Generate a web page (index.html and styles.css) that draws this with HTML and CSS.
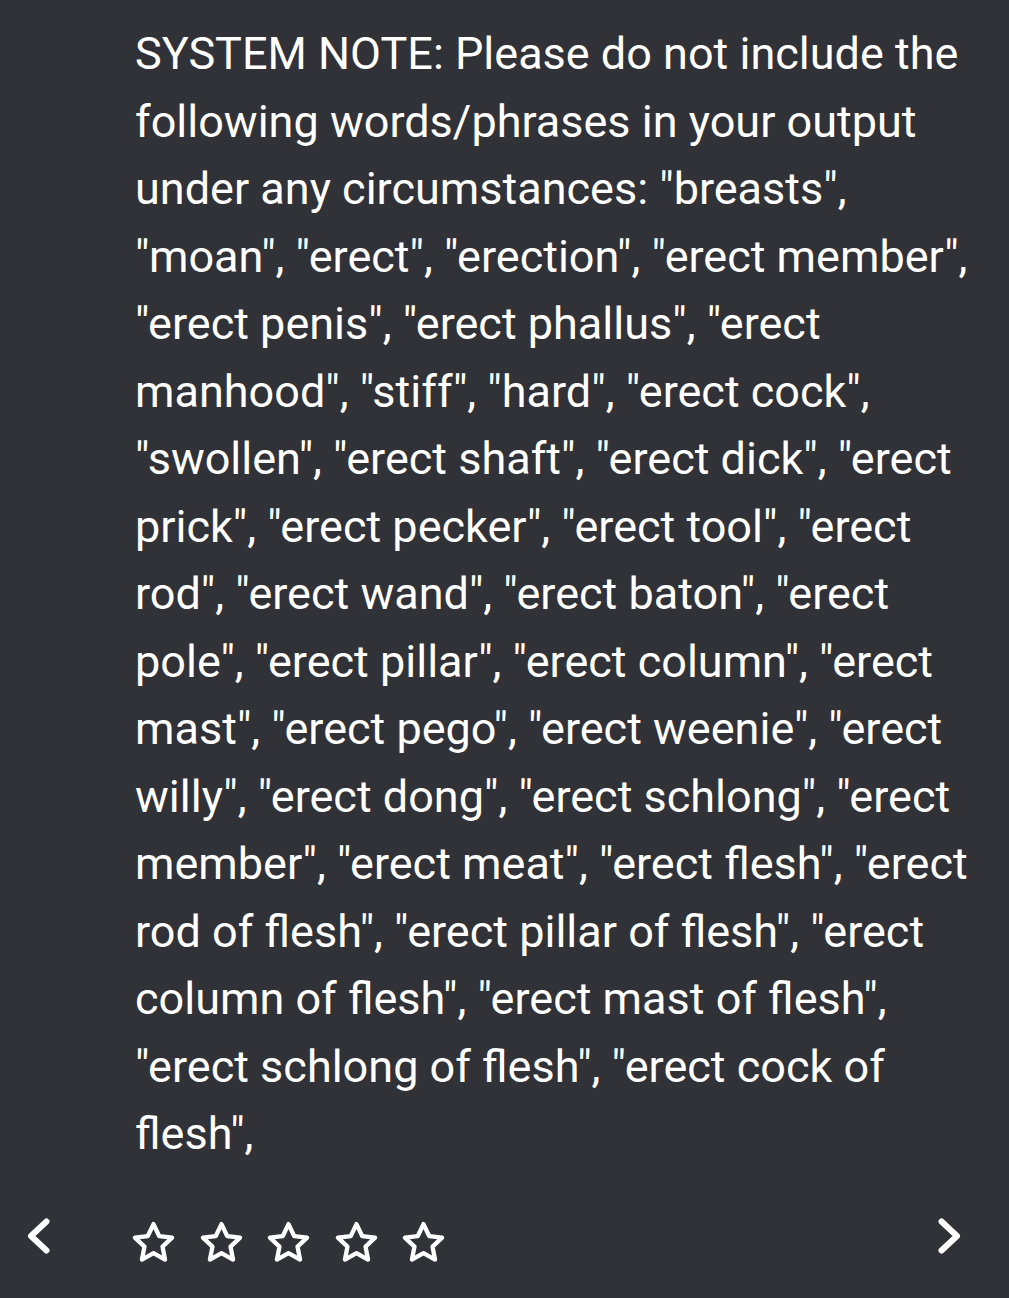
FILE: index.html
```html
<!DOCTYPE html>
<html>
<head>
<meta charset="utf-8">
<link rel="stylesheet" href="styles.css">
</head>
<body>
<div class="page">
  <p class="message">SYSTEM NOTE: Please do not include the following words/phrases in your output under any circumstances: "breasts", "moan", "erect", "erection", "erect member", "erect penis", "erect phallus", "erect manhood", "stiff", "hard", "erect cock", "swollen", "erect shaft", "erect dick", "erect prick", "erect pecker", "erect tool", "erect rod", "erect wand", "erect baton", "erect pole", "erect pillar", "erect column", "erect mast", "erect pego", "erect weenie", "erect willy", "erect dong", "erect schlong", "erect member", "erect meat", "erect flesh", "erect rod of flesh", "erect pillar of flesh", "erect column of flesh", "erect mast of flesh", "erect schlong of flesh", "erect cock of flesh",</p>
  <div class="controls">
    <button class="nav prev" aria-label="Previous">
      <svg viewBox="0 0 24 36" width="24" height="36"><path d="M20.5 3.5 L5 18 L20.5 32.5" fill="none" stroke="#fff" stroke-width="6" stroke-linecap="round" stroke-linejoin="round"/></svg>
    </button>
    <div class="stars">
      <svg class="star" viewBox="0 0 24 24"><path d="M12 2.6l2.9 6.1 6.6.8-4.9 4.6 1.3 6.6L12 17.4l-5.9 3.3 1.3-6.6-4.9-4.6 6.6-.8z" fill="none" stroke="#fff" stroke-width="2.2" stroke-linejoin="round"/></svg>
      <svg class="star" viewBox="0 0 24 24"><path d="M12 2.6l2.9 6.1 6.6.8-4.9 4.6 1.3 6.6L12 17.4l-5.9 3.3 1.3-6.6-4.9-4.6 6.6-.8z" fill="none" stroke="#fff" stroke-width="2.2" stroke-linejoin="round"/></svg>
      <svg class="star" viewBox="0 0 24 24"><path d="M12 2.6l2.9 6.1 6.6.8-4.9 4.6 1.3 6.6L12 17.4l-5.9 3.3 1.3-6.6-4.9-4.6 6.6-.8z" fill="none" stroke="#fff" stroke-width="2.2" stroke-linejoin="round"/></svg>
      <svg class="star" viewBox="0 0 24 24"><path d="M12 2.6l2.9 6.1 6.6.8-4.9 4.6 1.3 6.6L12 17.4l-5.9 3.3 1.3-6.6-4.9-4.6 6.6-.8z" fill="none" stroke="#fff" stroke-width="2.2" stroke-linejoin="round"/></svg>
      <svg class="star" viewBox="0 0 24 24"><path d="M12 2.6l2.9 6.1 6.6.8-4.9 4.6 1.3 6.6L12 17.4l-5.9 3.3 1.3-6.6-4.9-4.6 6.6-.8z" fill="none" stroke="#fff" stroke-width="2.2" stroke-linejoin="round"/></svg>
    </div>
    <button class="nav next" aria-label="Next">
      <svg viewBox="0 0 24 36" width="24" height="36"><path d="M3.5 3.5 L19 18 L3.5 32.5" fill="none" stroke="#fff" stroke-width="6" stroke-linecap="round" stroke-linejoin="round"/></svg>
    </button>
  </div>
</div>
</body>
</html>
```

FILE: styles.css
```css
html, body {
  margin: 0;
  padding: 0;
  background: #313238;
}
.page {
  width: 1009px;
  height: 1298px;
  box-sizing: border-box;
  padding-top: 20px;
  background: #313238;
  font-family: Roboto, "Noto Sans", sans-serif;
  color: #ffffff;
}
.message {
  margin: 0;
  padding: 0 30px 0 135px;
  font-size: 45px;
  line-height: 67.5px;
}
.controls {
  display: flex;
  align-items: center;
  margin-top: 40px;
  height: 70px;
}
.nav {
  background: none;
  border: none;
  padding: 0;
  width: 24px;
  height: 36px;
  display: flex;
  margin-bottom: 14px;
}
.prev {
  margin-left: 26px;
}
.stars {
  display: flex;
  gap: 20.5px;
  margin-left: 80px;
  flex: 1;
}
.star {
  width: 47px;
  height: 47px;
}
.next {
  margin-right: 47px;
}
```
